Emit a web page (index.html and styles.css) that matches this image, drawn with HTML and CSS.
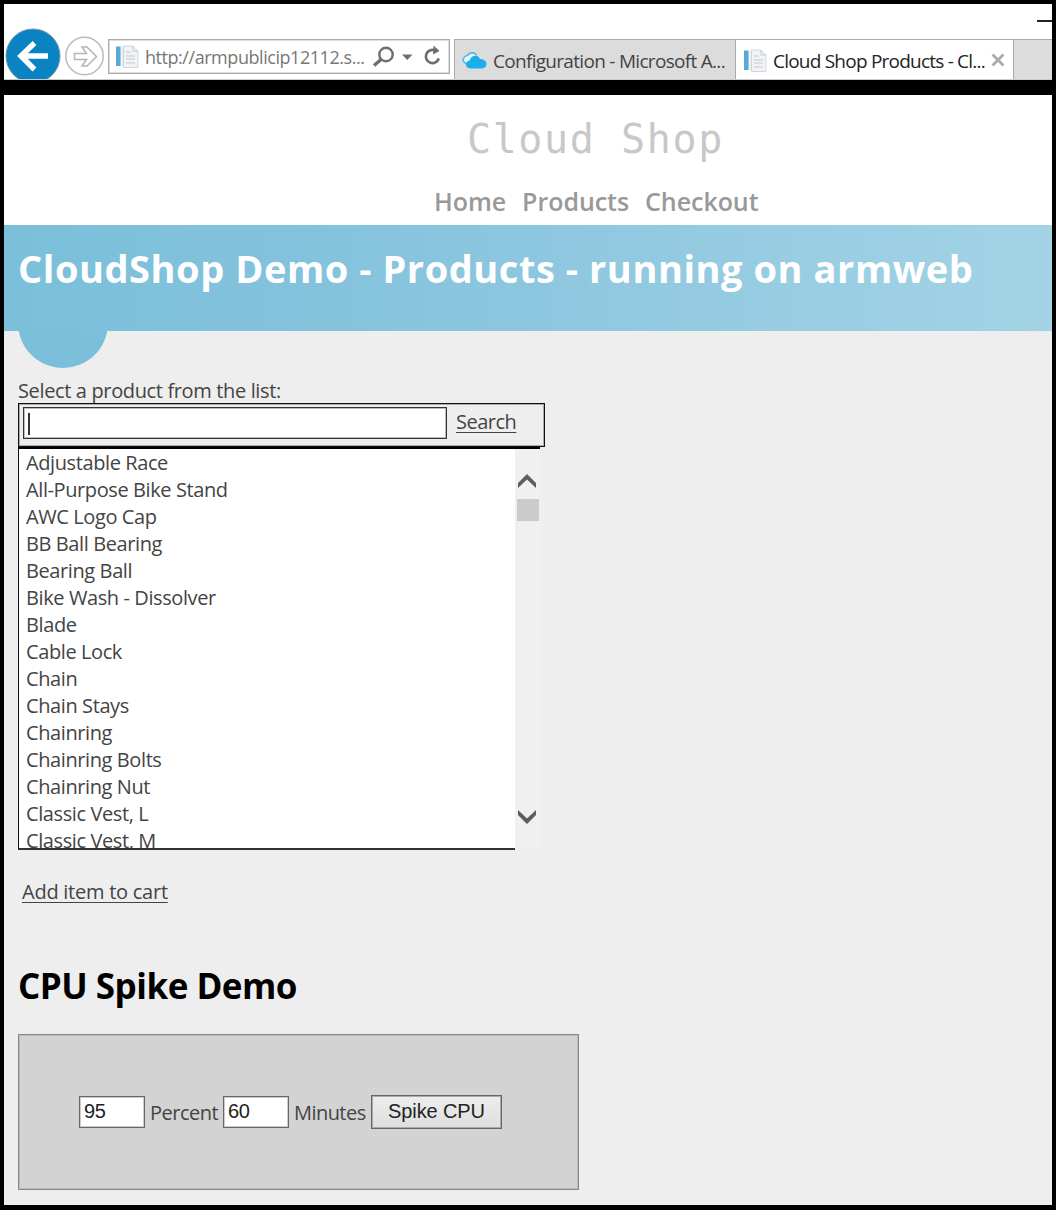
FILE: index.html
```html
<!DOCTYPE html>
<html lang="en">
<head>
<meta charset="utf-8">
<title>Cloud Shop Products</title>
<link rel="stylesheet" href="styles.css">
</head>
<body>
<svg class="defs" width="0" height="0">
  <symbol id="page-icon" viewBox="0 0 24 24">
    <rect x="1" y="1.500" width="4.600" height="19.500" fill="#5ba7d8"/>
    <path d="M6.500 2h2v19h-2z" fill="#e4edf4"/>
    <path d="M8.500 1h9.500l5 5v16.500H8.500z" fill="#f1f3f6" stroke="#d3d7dc"/>
    <path d="M18 1v5h5M11 7h5M11 11h9M11 14h9M11 18h9" fill="none" stroke="#c3c8ce"/>
  </symbol>
</svg>
<header class="browser">
  <svg class="nav-buttons" width="104" height="75" viewBox="0 0 104 75">
    <circle cx="29" cy="52" r="27" fill="#0a83c3" stroke="#7192a6"/>
    <path d="M44 52H17M30.500 39L17 52l13.500 13.500" fill="none" stroke="#fff" stroke-width="5.500"/>
    <circle cx="80.500" cy="52" r="18.700" fill="#fff" stroke="#b9b9b9" stroke-width="1.500"/>
    <path d="M70.500 49.500h12l-4.500-6.500h5l9.500 9.500-9.500 9.500h-5l4.500-6.500h-12z" fill="#fff" stroke="#b4b4b4" stroke-width="1.500"/>
  </svg>
  <div class="address">
    <svg class="favicon" width="24" height="24"><use href="#page-icon"/></svg>
    <span class="url">http://armpublicip12112.s...</span>
    <svg class="tools" width="70" height="24" viewBox="0 0 70 24">
      <g fill="none" stroke="#6e6e6e">
        <circle cx="14" cy="9.500" r="6.700" stroke-width="2.400"/>
        <path d="M9 14.500L2 20.500" stroke-width="3.400"/>
        <path d="M66.800 13.500a6.600 6.600 0 1 1-4-8.200" stroke-width="2.600"/>
      </g>
      <path d="M30 9.500h10.500l-5.250 5.500zM61.500 0.500l6 5.500-6.500 3.500z" fill="#6e6e6e"/>
    </svg>
  </div>
  <div class="tabs">
    <div class="tab">
      <svg class="cloud" width="25" height="18" viewBox="0 0 25 18">
        <path d="M7 12C2 12-.5 8 2.500 5c1-1.200 2-1.500 3-1.500C7.500 0 13 0 14.500 3.500" fill="#e6f3fa" stroke="#55b9e8" stroke-width="1.600"/>
        <path d="M9 16.500c-6 0-7-7-1.500-8C9 3 16 2 18 7c4 0 6.500 2.500 6.500 5 0 3-2.500 4.500-5.500 4.500z" fill="#1caee9"/>
      </svg>
      <span class="config-title">Configuration - Microsoft A...</span>
    </div>
    <div class="tab active">
      <svg class="favicon" width="24" height="24"><use href="#page-icon"/></svg>
      <span class="shop-title">Cloud Shop Products - Cl...</span>
      <svg class="close" width="14" height="14" viewBox="0 0 14 14"><path d="M1.500 1.500l11 11M12.500 1.500l-11 11" stroke="#aaa" stroke-width="2.800"/></svg>
    </div>
  </div>
  <i class="minimize"></i>
</header>
<div class="page">
  <div class="masthead">
    <div class="brand">Cloud Shop</div>
    <nav><a>Home</a><a>Products</a><a>Checkout</a></nav>
  </div>
  <div class="banner"><h1>CloudShop Demo - Products - running on armweb</h1></div>
  <main>
    <div class="bump"></div>
    <div class="prompt">Select a product from the list:</div>
    <div class="search"><div class="field"><i class="caret"></i></div><a>Search</a></div>
    <div class="list">
      <ul>
        <li>Adjustable Race</li><li>All-Purpose Bike Stand</li><li>AWC Logo Cap</li><li>BB Ball Bearing</li><li>Bearing Ball</li><li>Bike Wash - Dissolver</li><li>Blade</li><li>Cable Lock</li><li>Chain</li><li>Chain Stays</li><li>Chainring</li><li>Chainring Bolts</li><li>Chainring Nut</li><li>Classic Vest, L</li><li>Classic Vest, M</li>
      </ul>
      <div class="scrollbar">
        <svg width="20" height="16" viewBox="0 0 20 16"><path d="M1 10L10 1l9 9v5L10 6.500 1 15z" fill="#5d5d5d"/></svg>
        <i class="thumb"></i>
        <svg class="down" width="20" height="16" viewBox="0 0 20 16"><path d="M1 6l9 9 9-9V1l-9 8.500L1 1z" fill="#5d5d5d"/></svg>
      </div>
    </div>
    <a class="add">Add item to cart</a>
    <h2>CPU Spike Demo</h2>
    <div class="spike">
      <span class="num">95</span><span class="percent">Percent</span><span class="num">60</span><span class="minutes">Minutes</span><span class="button">Spike CPU</span>
    </div>
  </main>
</div>
</body>
</html>
```
FILE: styles.css
```css
* { box-sizing: border-box; }
body {
  margin: 0; padding: 4px 4px 5px; width: 1056px; height: 1210px; overflow: hidden;
  background: #000; color: #444; font: 20px/27px "Open Sans", "Noto Sans", sans-serif;
  letter-spacing: -0.4px; white-space: nowrap;
}
.defs { position: absolute; }
svg { display: block; flex: none; }
.browser { position: relative; height: 76px; background: #fff; display: flex; align-items: flex-start; border-bottom: 1px solid #ccc; overflow: hidden; }
.address { margin-top: 35px; width: 342px; height: 35px; border: 1px solid #aaa; outline: 1px solid #ddd; outline-offset: -2px; display: flex; align-items: center; padding-left: 6px; font-size: 18px; color: #777; }
.url { width: 224px; margin-left: 6px; padding-top: 2px; letter-spacing: -0.45px; }
.tools { margin-left: 3px; }
.tabs { margin: 35px 0 0 4px; flex: 1; height: 40px; display: flex; background: #dcdcdc; border-top: 1px solid #aaa; border-left: 1px solid #aaa; font-size: 19px; }
.tab { width: 281px; height: 39px; display: flex; align-items: center; padding: 3px 0 0 7px; border-right: 1px solid #aaa; }
.config-title { margin-left: 6px; letter-spacing: -0.7px; }
.tab.active { width: 278px; background: #fff; color: #222; }
.shop-title { margin-left: 6px; width: 213px; margin-right: 5px; letter-spacing: -0.78px; }
.close { margin-bottom: 3px; }
.minimize { position: absolute; right: 0; top: 16px; width: 15px; height: 2px; background: #222; }
.page { margin-top: 15px; height: 1110px; background: #eee; overflow: hidden; width: 1048px; }
.masthead { height: 130px; background: #fff; }
.brand { padding: 19px 0 0 463px; font: 40px/50px "DejaVu Sans Mono", monospace; font-weight: 400; letter-spacing: 1.6px; color: #c8c8c8; }
nav { display: flex; gap: 16px; padding: 19px 0 0 430px; font-size: 25px; line-height: 36px; font-weight: 600; color: #999; letter-spacing: -0.05px; }
.banner { height: 106px; padding: 18px 14px; background: linear-gradient(90deg, #7bbfda 0%, #86c3dd 35%, #a3d3e5 100%); }
h1 { margin: 0; font-size: 38px; line-height: 50px; font-weight: 700; color: #fff; letter-spacing: 0.55px; }
main { padding: 0 14px; }
.bump { width: 89px; height: 37px; overflow: hidden; display: flex; align-items: flex-end; justify-content: center; }
.bump::before { content: ""; flex: none; width: 90px; height: 90px; border-radius: 50%; background: #7bbfda; }
.prompt { margin-top: 9px; height: 26px; line-height: 28px; letter-spacing: -0.36px; }
.search { width: 527px; height: 44px; border: 1px solid #111; box-shadow: inset 0 0 0 1px #aaa; padding: 3px 0 0 4px; display: flex; align-items: flex-start; }
.field { width: 424px; height: 32px; border: 1px solid #333; box-shadow: inset 0 0 0 1px #bbb; background: #fff; padding: 5px 4px; }
.caret { display: block; width: 2px; height: 22px; background: #333; }
.search a { margin-left: 9px; line-height: 29px; letter-spacing: -0.5px; }
.search a, .add { text-decoration: underline; text-decoration-thickness: 1px; text-underline-offset: 3px; }
.list { width: 522px; height: 403px; display: flex; border-top: 2px solid #000; }
ul { margin: 0; padding: 0 0 0 7px; width: 497px; height: 401px; list-style: none; background: #fff; border-left: 1px solid #111; border-bottom: 2px solid #333; overflow: hidden; }
li { height: 27px; }
.scrollbar { width: 25px; background: #f0f0f0; padding: 24px 0 0 2px; }
.thumb { display: block; width: 22px; height: 22px; margin-top: 10px; background: #cbcbcb; }
.down { margin-top: 288px; }
.add { display: block; width: max-content; margin: 28px 0 0 4px; letter-spacing: -0.25px; }
h2 { margin: 57px 0 0; font-size: 35px; line-height: 48px; color: #000; letter-spacing: -0.5px; }
.spike { margin-top: 24px; width: 561px; height: 156px; border: 1px solid #888; box-shadow: inset 0 0 0 1px #bbb; background: #d3d3d3; display: flex; align-items: center; padding-left: 60px; }
.num { width: 66px; height: 32px; border: 1px solid #666; box-shadow: inset 0 0 0 1px #ccc; background: #fff; color: #222; font: 20px/29px "Liberation Sans", Arial, sans-serif; padding-left: 4px; }
.percent { width: 78px; padding-left: 5px; letter-spacing: -0.5px; }
.minutes { width: 82px; padding-left: 5px; letter-spacing: -0.55px; }
.button { width: 131px; height: 34px; border: 1px solid #666; box-shadow: inset 0 0 0 1px #aaa; background: linear-gradient(#eee, #dedede); color: #222; font: 20px/31px "Liberation Sans", Arial, sans-serif; letter-spacing: -0.1px; text-align: center; }
```
